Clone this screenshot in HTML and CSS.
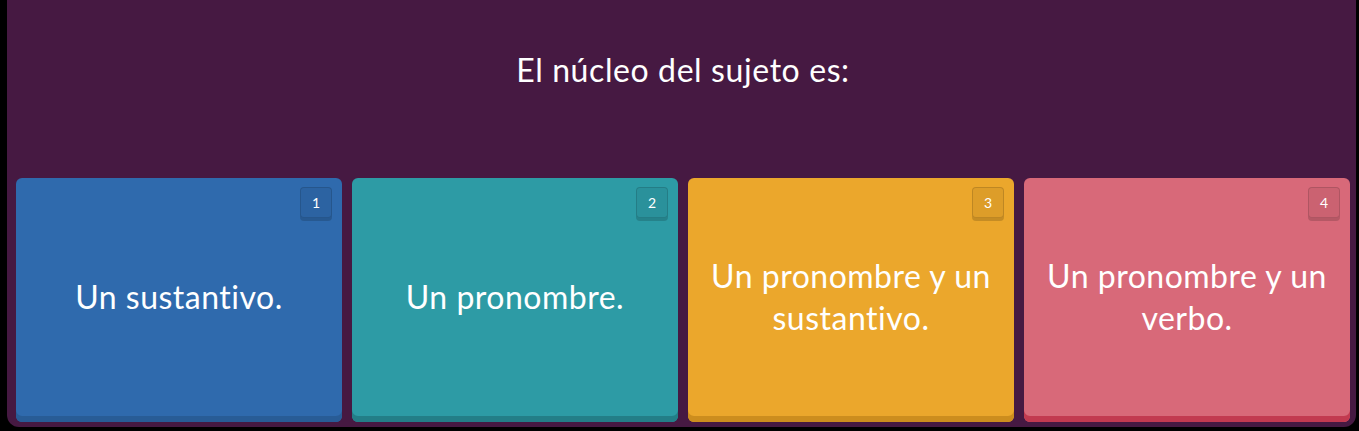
FILE: index.html
```html
<!DOCTYPE html>
<html lang="es">
<head>
  <meta charset="UTF-8">
  <meta name="viewport" content="width=device-width, initial-scale=1.0">
  <title>Pregunta</title>
  <link rel="stylesheet" href="styles.css">
</head>
<body>
  <div class="panel">
    <h1 class="question">El núcleo del sujeto es:</h1>
    <div class="answers">
      <div class="answer blue">
        <span class="key">1</span>
        <p>Un sustantivo.</p>
      </div>
      <div class="answer teal">
        <span class="key">2</span>
        <p>Un pronombre.</p>
      </div>
      <div class="answer orange">
        <span class="key">3</span>
        <p>Un pronombre y un sustantivo.</p>
      </div>
      <div class="answer pink">
        <span class="key">4</span>
        <p>Un pronombre y un verbo.</p>
      </div>
    </div>
  </div>
</body>
</html>
```

FILE: styles.css
```css
html, body {
  height: 100%;
}
body {
  margin: 0;
  background: #000;
  font-family: Lato, "Noto Sans", sans-serif;
  font-variant-ligatures: none;
  color: #fff;
  overflow: hidden;
}
.panel {
  box-sizing: border-box;
  height: 427px;
  margin: 0 3px 0 7px;
  padding: 0 6px 5px 9px;
  background: #461942;
  border-radius: 0 0 12px 12px;
  display: flex;
  flex-direction: column;
}
.question {
  margin: 0;
  height: 178px;
  padding-top: 49px;
  box-sizing: border-box;
  text-align: center;
  font-size: 32px;
  font-weight: 400;
  letter-spacing: 0.6px;
  line-height: 42px;
}
.answers {
  flex: 1;
  display: grid;
  grid-template-columns: repeat(4, 1fr);
  gap: 10px;
}
.answer {
  position: relative;
  border-radius: 6px;
  display: flex;
  align-items: center;
  justify-content: center;
  padding: 0 12px 6px;
  text-align: center;
}
.answer p {
  margin: 0;
  font-size: 32px;
  letter-spacing: 0.5px;
  line-height: 42px;
}
.blue {
  background: #2f6aad;
  box-shadow: inset 0 -6px 0 #285c96;
}
.teal {
  background: #2d9ba5;
  box-shadow: inset 0 -6px 0 #237e87;
}
.orange {
  background: #eba72c;
  box-shadow: inset 0 -6px 0 #cc8d1e;
}
.pink {
  background: #d86979;
  box-shadow: inset 0 -6px 0 #c23a50;
}
.key {
  position: absolute;
  top: 9px;
  right: 10px;
  box-sizing: border-box;
  width: 32px;
  height: 31px;
  border: 1px solid rgba(0, 0, 0, 0.14);
  border-radius: 4px;
  background: rgba(0, 0, 0, 0.06);
  box-shadow: 0 3px 0 rgba(0, 0, 0, 0.16);
  font-size: 14px;
  line-height: 29px;
  text-align: center;
}
```
